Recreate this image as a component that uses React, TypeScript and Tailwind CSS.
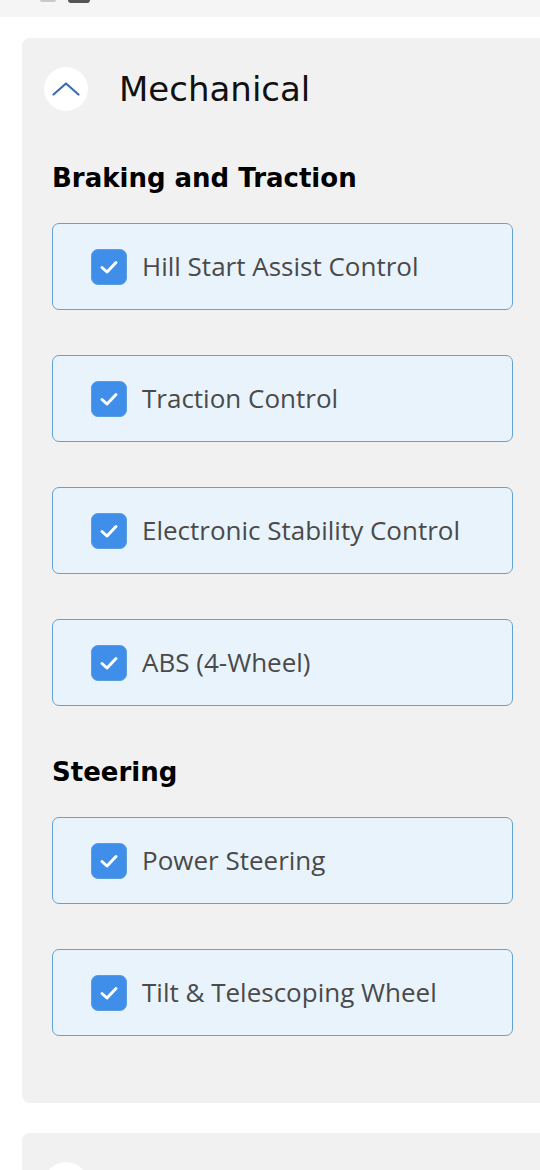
import React from 'react';

const groups = [
  {
    title: 'Braking and Traction',
    items: ['Hill Start Assist Control', 'Traction Control', 'Electronic Stability Control', 'ABS (4-Wheel)'],
  },
  {
    title: 'Steering',
    items: ['Power Steering', 'Tilt & Telescoping Wheel'],
  },
];

function Check() {
  return (
    <span className="flex h-[36px] w-[36px] shrink-0 items-center justify-center rounded-[7px] border border-[#5b9ee0] bg-[#3f8ee9]">
      <svg width="24" height="24" viewBox="0 0 24 24" fill="none">
        <path d="M5 12.5 L10 17 L19 7.5" stroke="white" strokeWidth="3" strokeLinecap="round" strokeLinejoin="round" />
      </svg>
    </span>
  );
}

export default function App() {
  return (
    <div className="h-[1170px] w-[540px] overflow-hidden bg-white">
      {/* bar above, cut off */}
      <div className="relative h-[17px] bg-[#f5f5f5]">
        <div className="absolute left-[40px] top-0 h-[2px] w-[16px] rounded-b bg-[#c9c9c9]" />
        <div className="absolute left-[68px] top-0 h-[3px] w-[22px] rounded-b bg-[#555]" />
      </div>

      <div className="ml-[22px] mt-[21px] w-[560px] rounded-[8px] bg-[#f1f1f1] pb-[67px]">
        <div className="flex items-center pl-[22px] pt-[29px]">
          <span className="flex h-[44px] w-[44px] items-center justify-center rounded-full bg-white">
            <svg width="28" height="14" viewBox="0 0 28 14" fill="none">
              <path d="M1.5 12.5 L14 1.5 L26.5 12.5" stroke="#3d6cb0" strokeWidth="2.2" strokeLinecap="round" strokeLinejoin="round" />
            </svg>
          </span>
          <span className="ml-[31px] text-[34px] font-normal leading-none text-[#111]" style={{ fontFamily: '"DejaVu Sans", sans-serif' }}>
            Mechanical
          </span>
        </div>

        <div className="pl-[30px] pt-[51px]">
          {groups.map((g, gi) => (
            <div key={g.title} className={gi > 0 ? 'mt-[50px]' : ''}>
              <h3 className="text-[26px] font-bold leading-[32px] text-black" style={{ fontFamily: '"DejaVu Sans", sans-serif' }}>
                {g.title}
              </h3>
              <div className="mt-[29px] flex flex-col gap-[45px]">
                {g.items.map((it) => (
                  <label
                    key={it}
                    className="flex h-[87px] w-[461px] items-center rounded-[7px] border border-[#63a3d4] bg-[#e9f3fc] pl-[38px]"
                  >
                    <Check />
                    <span className="ml-[15px] text-[26px] text-[#4a4a4a]" style={{ fontFamily: '"Open Sans", sans-serif' }}>
                      {it}
                    </span>
                  </label>
                ))}
              </div>
            </div>
          ))}
        </div>
      </div>

      <div className="ml-[22px] mt-[30px] h-[100px] w-[560px] rounded-[8px] bg-[#f1f1f1] pl-[22px] pt-[29px]">
        <span className="block h-[44px] w-[44px] rounded-full bg-white" />
      </div>
    </div>
  );
}
